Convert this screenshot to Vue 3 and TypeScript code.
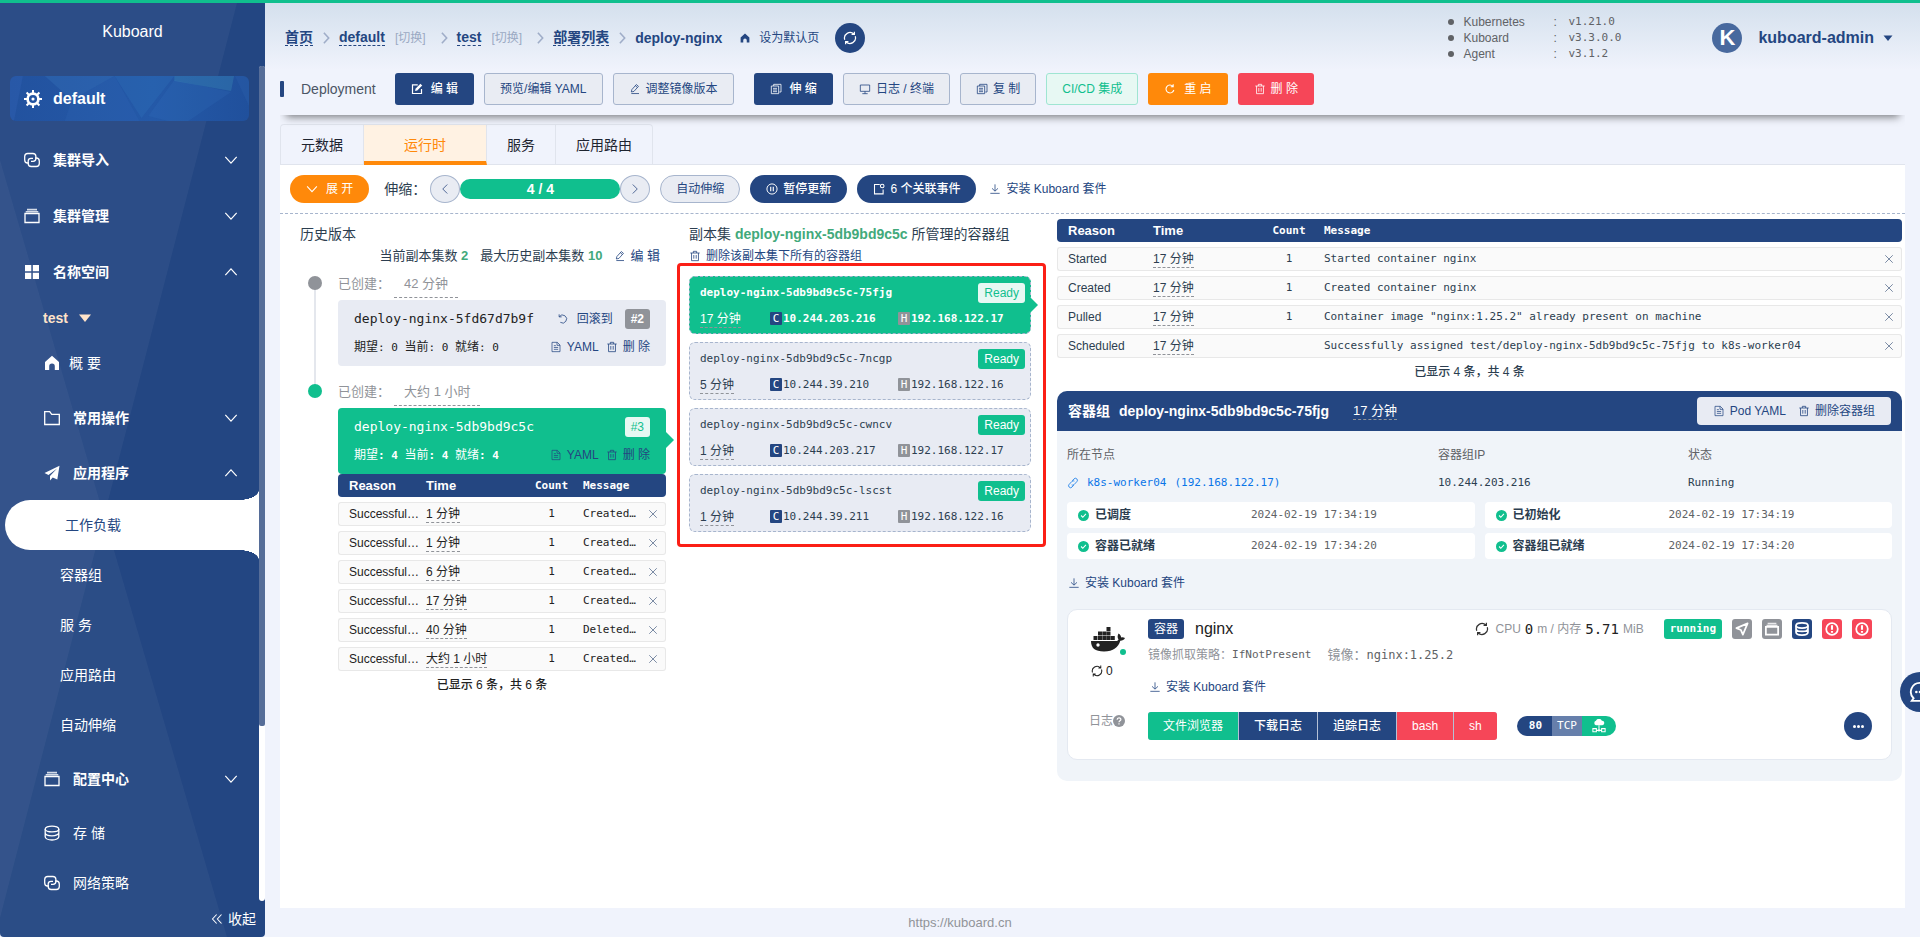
<script setup lang="ts">
interface EventRow {
  reason: string
  time: string
  count: string
  message: string
}
interface PodRow {
  name: string
  age: string
  podIp: string
  hostIp: string
  selected: boolean
}

const versions = [
  { label: 'Kubernetes', value: 'v1.21.0' },
  { label: 'Kuboard', value: 'v3.3.0.0' },
  { label: 'Agent', value: 'v3.1.2' },
]

const topMenu = [
  { label: '集群导入', icon: 'link', open: false },
  { label: '集群管理', icon: 'stack', open: false },
  { label: '名称空间', icon: 'grid', open: true },
]

const appMenu = ['容器组', '服 务', '应用路由', '自动伸缩']

const replicaSets = [
  { name: 'deploy-nginx-5fd67d7b9f', age: '42 分钟', count: 0, revision: '#2', current: false },
  { name: 'deploy-nginx-5db9bd9c5c', age: '大约 1 小时', count: 4, revision: '#3', current: true },
]

const rsEvents: EventRow[] = [
  { reason: 'Successful…', time: '1 分钟', count: '1', message: 'Created…' },
  { reason: 'Successful…', time: '1 分钟', count: '1', message: 'Created…' },
  { reason: 'Successful…', time: '6 分钟', count: '1', message: 'Created…' },
  { reason: 'Successful…', time: '17 分钟', count: '1', message: 'Created…' },
  { reason: 'Successful…', time: '40 分钟', count: '1', message: 'Deleted…' },
  { reason: 'Successful…', time: '大约 1 小时', count: '1', message: 'Created…' },
]

const pods: PodRow[] = [
  { name: 'deploy-nginx-5db9bd9c5c-75fjg', age: '17 分钟', podIp: '10.244.203.216', hostIp: '192.168.122.17', selected: true },
  { name: 'deploy-nginx-5db9bd9c5c-7ncgp', age: '5 分钟', podIp: '10.244.39.210', hostIp: '192.168.122.16', selected: false },
  { name: 'deploy-nginx-5db9bd9c5c-cwncv', age: '1 分钟', podIp: '10.244.203.217', hostIp: '192.168.122.17', selected: false },
  { name: 'deploy-nginx-5db9bd9c5c-lscst', age: '1 分钟', podIp: '10.244.39.211', hostIp: '192.168.122.16', selected: false },
]

const podEvents: EventRow[] = [
  { reason: 'Started', time: '17 分钟', count: '1', message: 'Started container nginx' },
  { reason: 'Created', time: '17 分钟', count: '1', message: 'Created container nginx' },
  { reason: 'Pulled', time: '17 分钟', count: '1', message: 'Container image "nginx:1.25.2" already present on machine' },
  { reason: 'Scheduled', time: '17 分钟', count: '', message: 'Successfully assigned test/deploy-nginx-5db9bd9c5c-75fjg to k8s-worker04' },
]

const conditions = [
  { name: '已调度', at: '2024-02-19 17:34:19' },
  { name: '已初始化', at: '2024-02-19 17:34:19' },
  { name: '容器已就绪', at: '2024-02-19 17:34:20' },
  { name: '容器组已就绪', at: '2024-02-19 17:34:20' },
]

const containerTools = [
  { icon: 'nav', tone: 'gray', label: '端口' },
  { icon: 'stack', tone: 'gray', label: '环境变量' },
  { icon: 'db', tone: 'navy', label: '挂载' },
  { icon: 'alert', tone: 'red', label: '就绪检查' },
  { icon: 'alert', tone: 'red', label: '存活检查' },
]
</script>

<template>
  <svg class="sprite" aria-hidden="true">
    <symbol id="i-gear" viewBox="0 0 16 16">
      <circle cx="8" cy="8" r="4.8" fill="none" stroke="currentColor" stroke-width="2.4" />
      <circle cx="8" cy="8" r="1.4" fill="currentColor" />
      <path d="M8 0v3M8 13v3M0 8h3M13 8h3M2.3 2.3l2.2 2.2M11.5 11.5l2.2 2.2M2.3 13.7l2.2-2.2M11.5 4.5l2.2-2.2" fill="none" stroke="currentColor" stroke-width="1.8" />
    </symbol>
    <symbol id="i-link" viewBox="0 0 16 16">
      <g fill="none" stroke="currentColor" stroke-width="1.3">
        <path d="M5 11H3.600A3 3 0 0 1 .7 8V4.400a3 3 0 0 1 3-2.900h5.200a3 3 0 0 1 3 2.900v2.200a2.800 2.800 0 0 1-2.800 2.800H7" />
        <path d="M11 6h1.200a3.100 3.100 0 0 1 3.100 3v2.500a3 3 0 0 1-3 3H7.200a3 3 0 0 1-3-3V9A2.800 2.800 0 0 1 7 6.300h2" />
      </g>
    </symbol>
    <symbol id="i-stack" viewBox="0 0 16 16">
      <path d="M3 .8h10v1.700H3zM1.700 3.100h12.600v1.500H1.700z" fill="currentColor" opacity=".8" />
      <path d="M1 5.500h14v9H1z" fill="none" stroke="currentColor" />
    </symbol>
    <symbol id="i-grid" viewBox="0 0 16 16">
      <path d="M1 1h6.300v6.300H1zM8.800 1H15v6.300H8.800zM1 8.700h6.300V15H1zM8.800 8.700H15V15H8.800z" fill="currentColor" />
    </symbol>
    <symbol id="i-home" viewBox="0 0 16 16">
      <path d="M8 .8 15 7v8h-4.200v-3.600a2.800 2.800 0 0 0-5.600 0V15H1V7z" fill="currentColor" />
    </symbol>
    <symbol id="i-folder" viewBox="0 0 16 16">
      <path d="M.7 1.700h5l2 2.600h7.600v10.200H.7z" fill="none" stroke="currentColor" stroke-width="1.3" />
    </symbol>
    <symbol id="i-plane" viewBox="0 0 16 16">
      <path d="M15.500.7.500 8l4 2L13 3.600 6 11v4.600l2.700-3.200 4.600 2z" fill="currentColor" />
    </symbol>
    <symbol id="i-nav" viewBox="0 0 16 16">
      <path d="M14.400 1.600 1.600 7l5.200 2.200L9 14.400z" fill="none" stroke="currentColor" stroke-linejoin="round" />
    </symbol>
    <symbol id="i-db" viewBox="0 0 16 16">
      <g fill="none" stroke="currentColor">
        <ellipse cx="8" cy="4" rx="6.800" ry="2.900" />
        <path d="M1.200 4v7.800C1.200 13.500 4 15 8 15s6.800-1.500 6.800-3.200V4M1.200 7.700c0 1.700 2.800 3.100 6.800 3.100s6.800-1.400 6.800-3.100" />
      </g>
    </symbol>
    <symbol id="i-down" viewBox="0 0 16 16">
      <path d="m1.500 4.500 6.500 7 6.500-7" fill="none" stroke="currentColor" stroke-width="1.4" />
    </symbol>
    <symbol id="i-up" viewBox="0 0 16 16">
      <path d="m1.500 11.500 6.500-7 6.500 7" fill="none" stroke="currentColor" stroke-width="1.4" />
    </symbol>
    <symbol id="i-left" viewBox="0 0 16 16">
      <path d="M11 2 5 8l6 6" fill="none" stroke="currentColor" stroke-width="1.3" />
    </symbol>
    <symbol id="i-right" viewBox="0 0 16 16">
      <path d="m5 2 6 6-6 6" fill="none" stroke="currentColor" stroke-width="1.3" />
    </symbol>
    <symbol id="i-sep" viewBox="0 0 8 14">
      <path d="m1 1 5.500 6L1 13" fill="none" stroke="currentColor" stroke-width="1.8" />
    </symbol>
    <symbol id="i-collapse" viewBox="0 0 16 16">
      <path d="M7.500 2 2 8l5.500 6M14 2 8.500 8l5.500 6" fill="none" stroke="currentColor" stroke-width="1.4" />
    </symbol>
    <symbol id="i-caret" viewBox="0 0 12 8">
      <path d="M0 .5h12L6 8z" fill="currentColor" />
    </symbol>
    <symbol id="i-refresh" viewBox="0 0 16 16">
      <path d="M2 10A6.300 6.300 0 0 1 12.500 3.700M13 .8V4H9.800M14 6a6.300 6.300 0 0 1-10.500 6.300M3 15.200V12h3.200" fill="none" stroke="currentColor" stroke-width="1.400" />
    </symbol>
    <symbol id="i-edit" viewBox="0 0 16 16">
      <path d="M9 2.500H2v11.500h12V8" fill="none" stroke="currentColor" stroke-width="1.600" />
      <path d="M5.500 10.500 6 7.800 12.500 1 15 3.300 8.300 10z" fill="currentColor" />
    </symbol>
    <symbol id="i-pen" viewBox="-1 -1 18 18">
      <path d="M2.500 12.500 3.200 9 10 1.300l3.200 2.700-6.800 7.600zM2.500 14.800H14M8.500 3l3.200 2.700" fill="none" stroke="currentColor" stroke-width="1.2" />
    </symbol>
    <symbol id="i-copy" viewBox="-1 -1 18 18">
      <path d="M4.500 3.500V1h11v11.500H13M1 3.500h11v11.500H1zM3.500 7h6M3.500 9.500h6M3.500 12h6" fill="none" stroke="currentColor" stroke-width="1.2" />
    </symbol>
    <symbol id="i-monitor" viewBox="-1 -1 18 18">
      <path d="M1 2h14v9.500H1zM4 15h8M8 11.500V15" fill="none" stroke="currentColor" stroke-width="1.2" />
    </symbol>
    <symbol id="i-restart" viewBox="-1 -1 18 18">
      <path d="M13.800 9.500A6 6 0 1 1 12.500 4M12.800.8v3.700H9.200" fill="none" stroke="currentColor" stroke-width="1.600" />
    </symbol>
    <symbol id="i-rollback" viewBox="-1 -1 18 18">
      <path d="M2.500 4.500A6 6 0 1 1 4 13M2.200 1v3.800H6" fill="none" stroke="currentColor" stroke-width="1.200" />
    </symbol>
    <symbol id="i-trash" viewBox="-1 -1 18 18">
      <path d="M1 3.500h14M2.800 3.500V15h10.400V3.500M5.500 3.500V1h5v2.500M6.200 6.500v5.500M9.800 6.500v5.500" fill="none" stroke="currentColor" stroke-width="1.200" />
    </symbol>
    <symbol id="i-doc" viewBox="-1 -1 18 18">
      <path d="M2 1h8l4 4v10H2zM9.500 1v4.500H14M4.800 6h3M4.800 8.700h6.400M4.800 11.500h6.400" fill="none" stroke="currentColor" stroke-width="1.1" />
    </symbol>
    <symbol id="i-pause" viewBox="0 0 16 16">
      <circle cx="8" cy="8" r="6.800" fill="none" stroke="currentColor" stroke-width="1.3" />
      <path d="M6.300 5v6M9.700 5v6" stroke="currentColor" stroke-width="1.5" />
    </symbol>
    <symbol id="i-note" viewBox="0 0 16 16">
      <path d="M9 2H2v12.500h11.500V8.500" fill="none" stroke="currentColor" stroke-width="1.4" />
      <circle cx="12.300" cy="4" r="2.400" fill="none" stroke="currentColor" stroke-width="1.4" />
    </symbol>
    <symbol id="i-download" viewBox="-1 -1 18 18">
      <path d="M8 1v10M3.500 7 8 11.300 12.500 7M1 14.500h14" fill="none" stroke="currentColor" stroke-width="1.200" />
    </symbol>
    <symbol id="i-x" viewBox="0 0 16 16">
      <path d="m2 2 12 12M14 2 2 14" fill="none" stroke="currentColor" stroke-width="1.300" />
    </symbol>
    <symbol id="i-chain" viewBox="-1 -1 18 18">
      <path d="m7 4.500 2.500-2.600a2.900 2.900 0 0 1 4.300 4L9.500 10.500a2.700 2.700 0 0 1-3.500.3M9 11.500l-2.500 2.600a2.900 2.900 0 0 1-4.300-4L6.500 5.500a2.700 2.700 0 0 1 3.500-.3" fill="none" stroke="currentColor" stroke-width="1.200" />
    </symbol>
    <symbol id="i-check" viewBox="0 0 16 16">
      <circle cx="8" cy="8" r="8" fill="currentColor" />
      <path d="m4.500 8 2.500 2.600 4.500-4.800" fill="none" stroke="#fff" stroke-width="1.600" />
    </symbol>
    <symbol id="i-alert" viewBox="0 0 16 16">
      <circle cx="8" cy="8" r="6.600" fill="none" stroke="currentColor" />
      <path d="M8 3.800v5M8 10.200v2" stroke="currentColor" stroke-width="2.400" />
    </symbol>
    <symbol id="i-question" viewBox="0 0 16 16">
      <circle cx="8" cy="8" r="8" fill="currentColor" />
      <path d="M5.500 6.300C5.500 3 10.500 3 10.500 6c0 1.700-2.500 1.700-2.500 3.500M8 11v1.800" fill="none" stroke="#fff" stroke-width="1.600" />
    </symbol>
    <symbol id="i-cloud" viewBox="0 0 16 16">
      <path d="M4.500 7a2.600 2.600 0 0 1 0-5A3.700 3.700 0 0 1 11.300 2a2.500 2.500 0 0 1 .5 5z" fill="currentColor" />
      <path d="M8 7v5M5 13h6M1 11h4v3.500H1zM11 11h4v3.500h-4z" fill="none" stroke="currentColor" stroke-width="1.200" />
      <circle cx="8" cy="13" r="1.300" fill="currentColor" />
    </symbol>
    <symbol id="i-docker" viewBox="0 0 34 25">
      <path d="M15.500 0h4v4h-4zM7 4.500h4v4H7zM11.300 4.500h4v4h-4zM15.500 4.500h4v4h-4zM2.500 9h4v4h-4zM7 9h4v4H7zM11.300 9h4v4h-4zM15.500 9h4v4h-4zM19.800 9h4v4h-4z" fill="currentColor" />
      <path d="M0 14h24.500c1.500 0 2.500-.6 3-1.600-1.300-2-1-4 0-5.900 1.700 1.100 2.500 2.400 2.600 3.900 1.400-.3 2.700-.1 3.900.6-.9 2-2.500 2.700-4.700 2.800C27.200 20.500 22.500 24.500 13 24.500 4 24.500 0 21 0 14z" fill="currentColor" />
      <circle cx="7" cy="18" r="1.700" fill="#fff" />
    </symbol>
    <symbol id="i-chat" viewBox="0 0 24 24">
      <path d="M12 2a9.800 9.800 0 1 1 0 19.600H3l2-2.800A9.800 9.800 0 0 1 12 2z" fill="none" stroke="currentColor" stroke-width="2" />
      <circle cx="8" cy="12" r="1.400" fill="currentColor" />
      <circle cx="12" cy="12" r="1.400" fill="currentColor" />
      <circle cx="16" cy="12" r="1.400" fill="currentColor" />
    </symbol>
  </svg>

  <div class="app">
    <aside class="side">
      <svg class="side-bg" viewBox="0 0 265 934" preserveAspectRatio="none" aria-hidden="true">
        <path d="M0 0H237L0 915z" fill="#fff" opacity=".045" />
        <path d="M0 157 227 934H0z" fill="#fff" opacity=".04" />
      </svg>
      <div class="brand">Kuboard</div>
      <div class="side-main">
        <nav class="menu">
          <a class="cluster" href="#cluster">
            <svg class="cluster-bg" viewBox="0 0 240 45" preserveAspectRatio="none" aria-hidden="true">
              <path d="M0 0h13L4 45H0z" fill="#3a6cc0" opacity=".25" />
              <path d="M35 0h70L62 24z" fill="#3e7fc4" opacity=".25" />
              <path d="M105 0 62 24 55 45h75z" fill="#3a74c4" opacity=".15" />
              <path d="M105 0h60l-33 42z" fill="#3583c8" opacity=".2" />
              <path d="M165 0h60l-3 15-57-10z" fill="#49a2c0" opacity=".25" />
              <path d="m165 4 57 12-43 29h-20l-20-5z" fill="#3c80cc" opacity=".15" />
              <path d="m226 0 14 30V0z" fill="#3a78c0" opacity=".15" />
            </svg>
            <svg class="ico18"><use href="#i-gear" /></svg>
            <span>default</span>
          </a>
          <a v-for="m in topMenu" :key="m.label" class="item top" href="#menu">
            <svg class="ico16"><use :href="`#i-${m.icon}`" /></svg>
            <span>{{ m.label }}</span>
            <svg class="arrow"><use :href="m.open ? '#i-up' : '#i-down'" /></svg>
          </a>
          <button class="ns" type="button">test <svg class="caret"><use href="#i-caret" /></svg></button>
          <a class="item home" href="#overview"><svg class="ico16"><use href="#i-home" /></svg><span>概 要</span></a>
          <a class="item folder" href="#common"><svg class="ico16"><use href="#i-folder" /></svg><span>常用操作</span><svg class="arrow"><use href="#i-down" /></svg></a>
          <a class="item folder" href="#apps"><svg class="ico16"><use href="#i-plane" /></svg><span>应用程序</span><svg class="arrow"><use href="#i-up" /></svg></a>
          <a class="active" href="#workload">工作负载</a>
          <a v-for="m in appMenu" :key="m" class="leaf" href="#leaf">{{ m }}</a>
          <a class="item folder config" href="#config"><svg class="ico16"><use href="#i-stack" /></svg><span>配置中心</span><svg class="arrow"><use href="#i-down" /></svg></a>
          <a class="item plain" href="#storage"><svg class="ico16"><use href="#i-db" /></svg><span>存 储</span></a>
          <a class="item plain" href="#network"><svg class="ico16"><use href="#i-link" /></svg><span>网络策略</span></a>
        </nav>
        <div class="scroll"><div class="thumb"></div></div>
      </div>
      <button class="collapse" type="button"><svg class="ico12"><use href="#i-collapse" /></svg>收起</button>
    </aside>

    <main class="main">
      <header class="head">
        <nav class="crumbs">
          <a class="crumb" href="#home">首页</a>
          <svg class="sep"><use href="#i-sep" /></svg>
          <a class="crumb" href="#default">default</a>
          <a class="switch" href="#switch">[切换]</a>
          <svg class="sep wide"><use href="#i-sep" /></svg>
          <a class="crumb" href="#test">test</a>
          <a class="switch" href="#switch">[切换]</a>
          <svg class="sep wide"><use href="#i-sep" /></svg>
          <a class="crumb" href="#list">部署列表</a>
          <svg class="sep"><use href="#i-sep" /></svg>
          <strong class="here">deploy-nginx</strong>
          <a class="pin" href="#pin"><svg class="ico10"><use href="#i-home" /></svg>设为默认页</a>
          <button class="round" type="button" aria-label="刷新"><svg class="ico14"><use href="#i-refresh" /></svg></button>
        </nav>
        <ul class="versions">
          <li v-for="v in versions" :key="v.label"><i class="bullet"></i><span class="vname">{{ v.label }}</span><span class="colon">:</span><span class="mono">{{ v.value }}</span></li>
        </ul>
        <button class="user" type="button">
          <span class="avatar">K</span>
          <span>kuboard-admin</span>
          <svg class="ucaret"><use href="#i-caret" /></svg>
        </button>
      </header>

      <div class="actions">
        <i class="mark"></i>
        <span class="kind">Deployment</span>
        <button class="btn navy roomy" type="button"><svg class="ico12"><use href="#i-edit" /></svg>编 辑</button>
        <button class="btn light" type="button">预览/编辑 YAML</button>
        <button class="btn light" type="button"><svg class="ico12"><use href="#i-pen" /></svg>调整镜像版本</button>
        <button class="btn navy roomy apart" type="button"><svg class="ico12"><use href="#i-copy" /></svg>伸 缩</button>
        <button class="btn light" type="button"><svg class="ico12"><use href="#i-monitor" /></svg>日志 / 终端</button>
        <button class="btn light" type="button"><svg class="ico12"><use href="#i-copy" /></svg>复 制</button>
        <button class="btn mint" type="button">CI/CD 集成</button>
        <button class="btn orange roomy" type="button"><svg class="ico12"><use href="#i-restart" /></svg>重 启</button>
        <button class="btn red" type="button"><svg class="ico12"><use href="#i-trash" /></svg>删 除</button>
      </div>

      <div class="tabs" role="tablist">
        <button class="tab" type="button" role="tab">元数据</button>
        <button class="tab on" type="button" role="tab" aria-selected="true">运行时</button>
        <button class="tab" type="button" role="tab">服务</button>
        <button class="tab" type="button" role="tab">应用路由</button>
      </div>

      <section class="sheet">
        <div class="scalebar">
          <button class="pill orange expand" type="button"><svg class="ico12"><use href="#i-down" /></svg>展 开</button>
          <span class="slabel">伸缩：</span>
          <button class="circ" type="button" aria-label="减少"><svg class="ico12"><use href="#i-left" /></svg></button>
          <div class="bar">4 / 4</div>
          <button class="circ" type="button" aria-label="增加"><svg class="ico12"><use href="#i-right" /></svg></button>
          <button class="pill light" type="button">自动伸缩</button>
          <button class="pill navy" type="button"><svg class="ico12"><use href="#i-pause" /></svg>暂停更新</button>
          <button class="pill navy" type="button"><svg class="ico12"><use href="#i-note" /></svg>6 个关联事件</button>
          <a class="act" href="#install"><svg class="ico12"><use href="#i-download" /></svg>安装 Kuboard 套件</a>
        </div>

        <div class="cols">
          <section class="history">
            <h2 class="title">历史版本</h2>
            <div class="stats">
              <span>当前副本集数 <b>2</b></span>
              <span>最大历史副本集数 <b>10</b></span>
              <a class="act" href="#edit"><svg class="ico12"><use href="#i-pen" /></svg>编 辑</a>
            </div>
            <div v-for="rs in replicaSets" :key="rs.name" class="node" :class="{ current: rs.current }">
              <i class="dot"></i>
              <div class="created">已创建：<span class="since">{{ rs.age }}</span></div>
              <article class="rs">
                <div class="line">
                  <span class="rsname">{{ rs.name }}</span>
                  <a v-if="!rs.current" class="act roll" href="#rollback"><svg class="ico12"><use href="#i-rollback" /></svg>回滚到</a>
                  <span class="badge">{{ rs.revision }}</span>
                </div>
                <div class="line">
                  <span class="counts"><em>期望</em>: {{ rs.count }} <em>当前</em>: {{ rs.count }} <em>就绪</em>: {{ rs.count }}</span>
                  <a class="act" href="#yaml"><svg class="ico12"><use href="#i-doc" /></svg>YAML</a>
                  <a class="act" href="#delete"><svg class="ico12"><use href="#i-trash" /></svg>删 除</a>
                </div>
              </article>
            </div>
            <div class="rsevents">
              <table class="events small">
                <thead>
                  <tr><th class="reason">Reason</th><th class="time">Time</th><th class="count">Count</th><th>Message</th><th class="close"></th></tr>
                </thead>
                <tbody>
                  <tr v-for="(e, i) in rsEvents" :key="i">
                    <td>{{ e.reason }}</td>
                    <td><span class="ago">{{ e.time }}</span></td>
                    <td class="count">{{ e.count }}</td>
                    <td class="mono">{{ e.message }}</td>
                    <td class="close"><button type="button" aria-label="关闭"><svg class="ico10"><use href="#i-x" /></svg></button></td>
                  </tr>
                </tbody>
              </table>
              <p class="shown">已显示 6 条，共 6 条</p>
            </div>
          </section>

          <section class="replicas">
            <h2 class="title">副本集 <b>deploy-nginx-5db9bd9c5c</b> 所管理的容器组</h2>
            <div class="sub"><a class="act" href="#delete-all"><svg class="ico12"><use href="#i-trash" /></svg>删除该副本集下所有的容器组</a></div>
            <div class="frame">
              <article v-for="p in pods" :key="p.name" class="pod" :class="{ sel: p.selected }">
                <div class="podline"><span class="mono">{{ p.name }}</span><span class="ready">Ready</span></div>
                <div class="podline">
                  <span class="page"><span class="ago">{{ p.age }}</span></span>
                  <span class="ip cip"><i class="tag c">C</i>{{ p.podIp }}</span>
                  <span class="ip"><i class="tag h">H</i>{{ p.hostIp }}</span>
                </div>
              </article>
            </div>
          </section>

          <section class="detail">
            <table class="events big">
              <thead>
                <tr><th class="reason">Reason</th><th class="time">Time</th><th class="count">Count</th><th>Message</th><th class="close"></th></tr>
              </thead>
              <tbody>
                <tr v-for="(e, i) in podEvents" :key="i">
                  <td>{{ e.reason }}</td>
                  <td><span class="ago">{{ e.time }}</span></td>
                  <td class="count">{{ e.count }}</td>
                  <td class="mono">{{ e.message }}</td>
                  <td class="close"><button type="button" aria-label="关闭"><svg class="ico10"><use href="#i-x" /></svg></button></td>
                </tr>
              </tbody>
            </table>
            <p class="shown">已显示 4 条，共 4 条</p>

            <article class="panel">
              <header class="phead">
                <span>容器组</span>
                <span class="pname">deploy-nginx-5db9bd9c5c-75fjg</span>
                <span class="ago pago">17 分钟</span>
                <div class="pbtns">
                  <a class="act" href="#pod-yaml"><svg class="ico12"><use href="#i-doc" /></svg>Pod YAML</a>
                  <a class="act" href="#pod-delete"><svg class="ico12"><use href="#i-trash" /></svg>删除容器组</a>
                </div>
              </header>
              <div class="pbody">
                <dl class="info">
                  <div><dt>所在节点</dt><dd><a class="nodelink" href="#node"><svg class="ico12"><use href="#i-chain" /></svg><span>k8s-worker04</span><span>(192.168.122.17)</span></a></dd></div>
                  <div><dt>容器组IP</dt><dd>10.244.203.216</dd></div>
                  <div><dt>状态</dt><dd>Running</dd></div>
                </dl>
                <div class="conds">
                  <div v-for="c in conditions" :key="c.name" class="cond">
                    <svg class="ok"><use href="#i-check" /></svg>
                    <strong>{{ c.name }}</strong>
                    <span class="mono">{{ c.at }}</span>
                  </div>
                </div>
                <a class="act install" href="#install"><svg class="ico12"><use href="#i-download" /></svg>安装 Kuboard 套件</a>

                <article class="box">
                  <div class="boxside">
                    <div class="whale"><svg class="docker"><use href="#i-docker" /></svg><i class="live"></i></div>
                    <div class="restarts"><svg class="ico12"><use href="#i-refresh" /></svg>0</div>
                    <div class="logs">日志<svg class="ico12"><use href="#i-question" /></svg></div>
                  </div>
                  <div class="boxmain">
                    <div class="r1">
                      <span class="ctag">容器</span>
                      <span class="cname">nginx</span>
                      <span class="usage"><svg class="ico14"><use href="#i-refresh" /></svg>CPU <b>0</b> m / 内存 <b>5.71</b> MiB</span>
                      <span class="running">running</span>
                      <button v-for="(t, i) in containerTools" :key="i" class="tool" :class="t.tone" type="button" :aria-label="t.label"><svg class="ico14"><use :href="`#i-${t.icon}`" /></svg></button>
                    </div>
                    <div class="r2"><span>镜像抓取策略：</span><span class="mono policy">IfNotPresent</span><span class="imgl">镜像：</span><span class="image">nginx:1.25.2</span></div>
                    <a class="act" href="#install"><svg class="ico12"><use href="#i-download" /></svg>安装 Kuboard 套件</a>
                    <div class="r4">
                      <div class="shells">
                        <button class="g green" type="button">文件浏览器</button>
                        <button class="g navy" type="button">下载日志</button>
                        <button class="g navy" type="button">追踪日志</button>
                        <button class="g red" type="button">bash</button>
                        <button class="g red" type="button">sh</button>
                      </div>
                      <div class="port"><span class="pnum">80</span><span class="ptype">TCP</span><span class="pcloud"><svg class="ico14"><use href="#i-cloud" /></svg></span></div>
                      <button class="more" type="button" aria-label="更多"><i></i><i></i><i></i></button>
                    </div>
                  </div>
                </article>
              </div>
            </article>
          </section>
        </div>
      </section>
      <footer class="foot"><a href="https://kuboard.cn">https://kuboard.cn</a></footer>
    </main>
    <button class="chat" type="button" aria-label="客服"><svg><use href="#i-chat" /></svg></button>
  </div>
</template>

<style>
body {
  background: #eff3fc;
  overflow-x: hidden;
}
</style>

<style scoped>
* {
  box-sizing: border-box;
}
.sprite {
  position: absolute;
  width: 0;
  height: 0;
}
.app {
  display: flex;
  min-height: 100vh;
  border-top: 3px solid #10bf8e;
  font: 12px/20px "Liberation Sans", "Noto Sans CJK SC", sans-serif;
  color: #2c3e50;
  overflow: hidden;
}
a {
  color: inherit;
  text-decoration: none;
}
button {
  font: inherit;
  color: inherit;
  background: none;
  border: 0;
  padding: 0;
  margin: 0;
  cursor: pointer;
}
svg {
  flex: none;
  display: block;
  stroke-width: 1.3px;
}
.ico10 { width: 10px; height: 10px; }
.ico12 { width: 12px; height: 12px; }
.ico14 { width: 14px; height: 14px; }
.ico16 { width: 16px; height: 16px; }
.ico18 { width: 18px; height: 18px; }
.mono {
  font-family: "DejaVu Sans Mono", "Noto Sans CJK SC", monospace;
  font-size: 11px;
}
.act {
  display: inline-flex;
  align-items: center;
  gap: 5px;
  color: #244681;
}

/* sidebar */
.side {
  position: relative;
  width: 265px;
  flex: none;
  display: flex;
  flex-direction: column;
  background: #234682;
  color: #fff;
  font-size: 14px;
  border-radius: 0 0 4px 4px;
}
.side-bg {
  position: absolute;
  inset: 0;
  width: 100%;
  height: 100%;
}
.brand {
  position: relative;
  height: 63px;
  line-height: 58px;
  text-align: center;
  font-size: 16px;
}
.side-main {
  position: relative;
  flex: 1 1 0;
  min-height: 0;
  display: flex;
}
.menu {
  flex: 1;
  display: flex;
  flex-direction: column;
  padding-top: 10px;
  overflow-y: auto;
  scrollbar-width: none;
}
.menu > * {
  flex-shrink: 0;
}
.cluster {
  position: relative;
  display: flex;
  align-items: center;
  gap: 11px;
  height: 45px;
  margin: 0 10px 11px;
  padding-left: 14px;
  border-radius: 6px;
  background: linear-gradient(90deg, #22529f, #2459a8 60%, #20509c);
  font-size: 16px;
  font-weight: 700;
  overflow: hidden;
}
.cluster-bg {
  position: absolute;
  inset: 0;
  width: 100%;
  height: 100%;
}
.cluster .ico18,
.cluster span {
  position: relative;
}
.item {
  display: flex;
  align-items: center;
  padding: 0 21px 0 44px;
}
.item span {
  flex: 1;
}
.item.top {
  height: 56px;
  padding-left: 24px;
  gap: 13px;
  font-weight: 700;
}
.arrow {
  width: 14px;
  height: 14px;
}
.ns {
  display: flex;
  align-items: center;
  gap: 11px;
  height: 36px;
  padding-left: 43px;
  color: #ffe3c9;
  font-weight: 700;
}
.caret {
  width: 12px;
  height: 8px;
}
.item.home {
  height: 54px;
  gap: 9px;
}
.item.folder {
  height: 55px;
  gap: 13px;
  font-weight: 700;
}
.item.config {
  height: 58px;
}
.item.plain {
  height: 50px;
  gap: 13px;
}
.active {
  position: relative;
  height: 50px;
  margin-left: 5px;
  padding-left: 60px;
  line-height: 50px;
  background: #fff;
  border-radius: 25px 0 0 25px;
  color: #244681;
}
.active::before,
.active::after {
  content: "";
  position: absolute;
  right: 0;
  width: 20px;
  height: 10px;
}
.active::before {
  bottom: 100%;
  background: radial-gradient(20px 10px at 0 0, transparent 98%, #fff 100%);
}
.active::after {
  top: 100%;
  background: radial-gradient(20px 10px at 0 100%, transparent 98%, #fff 100%);
}
.leaf {
  height: 50px;
  line-height: 50px;
  padding-left: 60px;
}
.scroll {
  width: 6px;
  background: #fff;
  border-radius: 3px;
}
.thumb {
  height: 79%;
  border-radius: 2px;
  background: #566d98;
}
.collapse {
  position: relative;
  display: flex;
  align-items: center;
  justify-content: flex-end;
  gap: 5px;
  height: 36px;
  padding-right: 9px;
}

/* header */
.main {
  flex: 1;
  min-width: 0;
  display: flex;
  flex-direction: column;
  padding: 0 15px;
  background: linear-gradient(#d4e0ed, #f0f3fc 67px);
}
.head {
  display: flex;
  align-items: center;
  height: 70px;
}
.crumbs {
  display: flex;
  align-items: center;
  flex: 1;
  padding-left: 5px;
  color: #244681;
}
.crumb,
.here {
  font-size: 14px;
  font-weight: 700;
}
.crumb {
  line-height: 15px;
  border-bottom: 1px dashed #244681;
}
.switch {
  margin-left: 10px;
  color: #9ba9c3;
}
.sep {
  width: 7px;
  height: 14px;
  margin: 0 9px 0 10px;
  color: #9fadc8;
}
.sep.wide {
  margin-left: 15px;
}
.pin {
  display: flex;
  align-items: center;
  gap: 9px;
  margin-left: 18px;
}
.round {
  width: 30px;
  height: 30px;
  margin-left: 16px;
  display: grid;
  place-items: center;
  border-radius: 50%;
  background: #244681;
  color: #fff;
}
.versions {
  list-style: none;
  margin: 0 91px 0 0;
  padding: 0;
  line-height: 16px;
  color: #606266;
}
.versions li {
  display: flex;
  align-items: center;
}
.bullet {
  width: 6px;
  height: 6px;
  border-radius: 50%;
  background: #606266;
  margin-right: 9px;
}
.vname {
  width: 90px;
}
.colon {
  width: 15px;
}
.user {
  display: flex;
  align-items: center;
  gap: 16px;
  padding-right: 12px;
  color: #244681;
  font-size: 16px;
  font-weight: 700;
}
.avatar {
  width: 30px;
  height: 30px;
  line-height: 30px;
  border-radius: 50%;
  background: #48699e;
  color: #fff;
  font-size: 22px;
  text-align: center;
}
.ucaret {
  width: 10px;
  height: 6px;
  margin-left: -7px;
}

/* action bar */
.actions {
  display: flex;
  align-items: center;
  gap: 10px;
  padding-bottom: 10px;
  background: #f0f3fc;
  box-shadow: 0 8px 8px -6px rgba(0, 0, 0, .5);
  clip-path: inset(0 0 -12px 0);
}
.mark {
  width: 4px;
  height: 16px;
  border-radius: 1px;
  background: #244681;
}
.kind {
  margin: 0 9px 0 7px;
  font-size: 14px;
  color: #4b5565;
}
.btn,
.pill {
  display: flex;
  align-items: center;
  justify-content: center;
  gap: 5px;
  height: 32px;
  padding: 0 15px;
  border: 1px solid transparent;
  border-radius: 3px;
  white-space: nowrap;
}
.roomy {
  gap: 8px;
}
.apart {
  margin-left: 10px;
}
.navy {
  background: #244681;
  color: #fff;
  font-weight: 500;
}
.light {
  background: #e9ecf3;
  border-color: #a7b5cd;
  color: #244681;
}
.mint {
  background: #e7f8f3;
  border-color: #9fe5d2;
  color: #10bf8e;
}
.orange {
  background: #ff890a;
  color: #fff;
}
.red {
  background: #f64658;
  color: #fff;
}

/* tabs */
.tabs {
  display: flex;
  margin-top: 9px;
  border-bottom: 1px solid #e0e4ed;
}
.tab {
  height: 40px;
  padding: 0 20px;
  border: solid #e0e4ed;
  border-width: 1px 1px 0 0;
  font-size: 14px;
  color: #1e2430;
}
.tab:first-child {
  border-left-width: 1px;
  border-top-left-radius: 4px;
}
.tab:last-child {
  border-top-right-radius: 4px;
}
.tab.on {
  height: 41px;
  margin-bottom: -1px;
  padding: 3px 40px 0;
  background: #fff2e3;
  border-bottom: 4px solid #ff890a;
  color: #ff890a;
}

.sheet {
  flex: 1;
  background: #fff;
}
.scalebar {
  display: flex;
  align-items: center;
  height: 49px;
  padding-left: 10px;
  border-bottom: 1px dashed #a7b5cd;
}
.pill {
  height: 28px;
  padding: 0 15px;
  margin-left: 10px;
  border-radius: 14px;
}
.pill.expand {
  margin-left: 0;
  gap: 8px;
}
.slabel {
  margin-left: 15px;
  width: 46px;
  font-size: 14px;
  white-space: nowrap;
}
.circ {
  width: 30px;
  height: 28px;
  display: grid;
  place-items: center;
  border: 1px solid #a7b5cd;
  border-radius: 50%;
  background: #e9ecf3;
  color: #4c6594;
}
.bar {
  width: 160px;
  height: 20px;
  border-radius: 10px;
  background: #10bf8e;
  color: #fff;
  font-size: 14px;
  font-weight: 700;
  text-align: center;
}
.scalebar .act {
  margin-left: 13px;
}

.cols {
  display: grid;
  grid-template-columns: 386fr 369fr 845fr;
  gap: 11px;
  padding: 0 3px 0 0;
}
.title {
  margin: 10px 0 2px 20px;
  font-size: 14px;
  font-weight: 400;
  white-space: nowrap;
}
.title b,
.stats b {
  color: #42a97b;
}

/* history */
.stats {
  display: flex;
  justify-content: flex-end;
  gap: 12px;
  padding-right: 6px;
  margin-bottom: 4px;
  font-size: 13px;
}
.stats .act {
  gap: 4px;
}
.node {
  position: relative;
  padding: 0 0 12px 58px;
}
.node.current {
  padding-bottom: 0;
}
.node:not(.current)::before {
  content: "";
  position: absolute;
  left: 34px;
  top: 13px;
  width: 2px;
  height: 100%;
  background: #e4e7ed;
}
.dot {
  position: absolute;
  left: 28px;
  top: 6px;
  width: 14px;
  height: 14px;
  border-radius: 50%;
  background: #909399;
}
.current .dot {
  background: #10bf8e;
}
.created {
  height: 28px;
  margin-bottom: 2px;
  line-height: 27px;
  font-size: 13px;
  color: #909399;
}
.since {
  display: inline-block;
  height: 28px;
  margin-left: 4px;
  padding: 0 10px;
  border-bottom: 1px dashed #909399;
}
.rs {
  position: relative;
  padding: 9px 16px;
  border-radius: 4px;
  background: #e8ebf3;
  color: #222;
}
.current .rs {
  background: #10bf8e;
  color: #fff;
}
.current .rs::after {
  content: "";
  position: absolute;
  left: 100%;
  top: 24px;
  border: 8px solid transparent;
  border-left-color: #10bf8e;
  border-right-width: 0;
}
.line {
  display: flex;
  align-items: center;
  gap: 7px;
  height: 20px;
}
.line + .line {
  margin-top: 8px;
}
.line > :first-child {
  flex: 1;
  white-space: nowrap;
}
.rsname {
  font: 13px/20px "DejaVu Sans Mono", monospace;
}
.counts {
  font: 11px/20px "DejaVu Sans Mono", "Noto Sans CJK SC", monospace;
}
.counts em {
  font: 12px/20px "Noto Sans CJK SC", sans-serif;
}
.current .counts {
  font-weight: 700;
}
.roll {
  gap: 8px;
  margin-right: 5px;
}
.badge {
  height: 20px;
  padding: 0 6px;
  border-radius: 3px;
  background: #909399;
  color: #fff;
  font-weight: 700;
}
.current .badge {
  background: #e7f8f3;
  color: #10bf8e;
  font-weight: 400;
}
.rsevents {
  padding-left: 58px;
  color: #222;
}

/* event tables */
.events {
  width: 100%;
  table-layout: fixed;
  border-collapse: separate;
  border-spacing: 0 5px;
  margin-top: -5px;
  line-height: 18px;
}
.events th {
  height: 23px;
  padding: 0;
  background: #244681;
  color: #fff;
  text-align: left;
  font: 700 11px/18px "DejaVu Sans Mono", monospace;
}
.events th.reason,
.events th.time {
  font: 700 13px/18px "Liberation Sans", sans-serif;
}
.events th:first-child {
  padding-left: 11px;
  border-radius: 4px 0 0 4px;
}
.events th:last-child {
  border-radius: 0 4px 4px 0;
}
.events td {
  height: 24px;
  padding: 0;
  background: #fafafa;
  border: solid #e8e8e8;
  border-width: 1px 0;
  white-space: nowrap;
}
.events td:first-child {
  padding-left: 10px;
  border-left-width: 1px;
  border-radius: 3px 0 0 3px;
}
.events td:last-child {
  border-right-width: 1px;
  border-radius: 0 3px 3px 0;
}
.small .reason { width: 88px; }
.small .time { width: 104px; }
.small .count { width: 53px; }
.small .close { width: 24px; }
.big .reason { width: 96px; }
.big .time { width: 115px; }
.big .count { width: 56px; }
.big .close { width: 24px; }
.events .count {
  text-align: center;
  font-family: "DejaVu Sans Mono", monospace;
  font-size: 11px;
  padding-right: 14px;
}
.small .count {
  padding-right: 10px;
}
.close button {
  display: block;
  margin-left: 6px;
  color: #5f7391;
}
.ago {
  display: inline-block;
  line-height: 16px;
  border-bottom: 1px dashed #909399;
}
.shown {
  margin: 0;
  padding-right: 20px;
  line-height: 18px;
  text-align: center;
  font-weight: 500;
}

/* replicas */
.replicas .title {
  margin-left: 12px;
}
.sub {
  display: flex;
  padding-left: 12px;
  height: 20px;
}
.frame {
  position: relative;
  margin-top: -3px;
  padding: 10px 12px 12px 9px;
  border: 3px solid #fb1f16;
  border-radius: 4px;
  display: grid;
  gap: 8px;
}
.pod {
  position: relative;
  height: 58px;
  padding: 6px 5px 4px 10px;
  border: 1px dashed #a7b5cd;
  border-radius: 6px;
  background: #e8ebf3;
}
.pod.sel {
  background: #10bf8e;
  color: #fff;
}
.sel .mono,
.sel .ip {
  font-weight: 700;
}
.pod.sel::after {
  content: "";
  position: absolute;
  left: 100%;
  top: 20px;
  border: 8px solid transparent;
  border-left-color: #10bf8e;
  border-right-width: 0;
}
.podline {
  display: flex;
  align-items: center;
  height: 20px;
}
.podline + .podline {
  margin-top: 6px;
}
.podline .mono {
  flex: 1;
}
.ready {
  height: 20px;
  padding: 0 6px;
  border-radius: 3px;
  background: #10bf8e;
  color: #fff;
  font-weight: 500;
}
.sel .ready {
  background: #e7f8f3;
  color: #10bf8e;
  font-weight: 400;
}
.page {
  width: 70px;
}
.ip {
  display: flex;
  align-items: center;
  gap: 1px;
  font: 11px/20px "DejaVu Sans Mono", monospace;
}
.cip {
  width: 128px;
}
.tag {
  width: 12px;
  height: 13px;
  margin-bottom: 2px;
  border-radius: 1px;
  color: #fff;
  font-style: normal;
  font-weight: 400;
  line-height: 14px;
  text-align: center;
}
.tag.c { background: #244681; }
.tag.h { background: #909399; }

/* pod panel */
.detail {
  padding-top: 5px;
  min-width: 0;
}
.panel {
  margin-top: 10px;
  border-radius: 10px;
  background: #f0f4f9;
  overflow: hidden;
}
.phead {
  display: flex;
  align-items: center;
  height: 40px;
  padding: 0 11px;
  background: #244681;
  color: #fff;
  font-size: 14px;
  font-weight: 700;
}
.pname {
  margin: 0 24px 0 9px;
}
.pago {
  font-size: 13px;
  font-weight: 400;
}
.pbtns {
  display: flex;
  align-items: center;
  gap: 12px;
  height: 28px;
  margin-left: auto;
  padding: 0 16px;
  border-radius: 4px;
  background: #e8ebf3;
  font-size: 12px;
  font-weight: 400;
}
.pbody {
  padding: 14px 10px 21px;
}
.info {
  display: grid;
  grid-template-columns: 371fr 250fr 204fr;
  margin: 0 0 9px;
}
.info dt {
  color: #606266;
}
.info dd {
  margin: 8px 0 0;
  font: 11px/20px "DejaVu Sans Mono", monospace;
}
.nodelink {
  display: flex;
  align-items: center;
  gap: 8px;
  color: #0a75e8;
}
.conds {
  display: grid;
  grid-template-columns: 1fr 1fr;
  gap: 5px 10px;
}
.cond {
  display: flex;
  align-items: center;
  height: 26px;
  padding-left: 11px;
  border-radius: 4px;
  background: #fff;
}
.ok {
  width: 11px;
  height: 11px;
  margin-right: 6px;
  color: #10bf8e;
}
.cond strong {
  width: 156px;
}
.cond .mono {
  color: #606266;
}
.install {
  display: flex;
  margin: 14px 0 16px 1px;
}
.box {
  display: flex;
  padding: 9px 19px 19px 21px;
  border: 1px solid #e4e9f1;
  border-radius: 10px;
  background: #fff;
}
.boxside {
  width: 59px;
  padding-top: 8px;
}
.whale {
  position: relative;
  padding-left: 2px;
}
.docker {
  width: 34px;
  height: 25px;
  color: #222;
}
.live {
  position: absolute;
  left: 31px;
  top: 22px;
  width: 6px;
  height: 6px;
  border-radius: 50%;
  background: #10bf8e;
}
.restarts {
  display: flex;
  align-items: center;
  gap: 3px;
  margin: 9px 0 30px 2px;
  color: #222;
}
.logs {
  display: flex;
  align-items: center;
  color: #909399;
}
.boxmain {
  flex: 1;
}
.r1,
.r2,
.r4 {
  display: flex;
  align-items: center;
}
.ctag {
  padding: 0 6px;
  border-radius: 3px;
  background: #244681;
  color: #fff;
}
.cname {
  margin-left: 11px;
  font-size: 16px;
  color: #222;
}
.usage {
  display: flex;
  align-items: center;
  gap: 4px;
  margin-left: auto;
  margin-right: 20px;
  color: #909399;
}
.usage svg {
  margin-right: 2px;
  color: #333;
}
.usage b {
  font: 14px/20px "DejaVu Sans Mono", monospace;
  color: #222;
}
.running {
  padding: 0 6px;
  border-radius: 3px;
  background: #10bf8e;
  color: #fff;
  font: 700 11px/20px "DejaVu Sans Mono", monospace;
}
.tool {
  width: 20px;
  height: 20px;
  margin-left: 10px;
  display: grid;
  place-items: center;
  border-radius: 3px;
  color: #fff;
}
.tool svg {
  stroke-width: 2px;
}
.tool.gray {
  background: #909399;
}
.r2 {
  margin: 6px 0 12px;
  color: #909399;
}
.policy,
.image {
  color: #606266;
}
.imgl {
  margin-left: 16px;
  font-size: 13px;
}
.image {
  font: 12px/20px "DejaVu Sans Mono", monospace;
}
.boxmain > .act {
  display: flex;
  margin-left: 1px;
}
.r4 {
  margin-top: 15px;
}
.shells {
  display: flex;
  gap: 1px;
  border-radius: 3px;
  overflow: hidden;
  background: #b5c1d6;
}
.g {
  height: 28px;
  padding: 0 15px;
}
.green {
  background: #10bf8e;
  color: #fff;
}
.port {
  display: flex;
  margin-left: 20px;
  border-radius: 10px;
  overflow: hidden;
  color: #fff;
  font: 700 11px/20px "DejaVu Sans Mono", monospace;
}
.pnum {
  padding: 0 10px 0 12px;
  background: #244681;
}
.ptype {
  padding: 0 5px;
  background: #667fab;
  font-weight: 400;
}
.pcloud {
  display: grid;
  place-items: center;
  width: 34px;
  background: #10bf8e;
}
.more {
  display: flex;
  align-items: center;
  justify-content: center;
  gap: 1px;
  width: 28px;
  height: 28px;
  margin-left: auto;
  border-radius: 50%;
  background: #244681;
}
.more i {
  width: 3px;
  height: 3px;
  border-radius: 50%;
  background: #fff;
}

.foot {
  height: 29px;
  line-height: 29px;
  padding-right: 265px;
  text-align: center;
  font-size: 13px;
  color: #909399;
}
.chat {
  position: fixed;
  right: -20px;
  top: 672px;
  width: 40px;
  height: 40px;
  padding-left: 9px;
  border-radius: 50%;
  background: #244681;
  color: #fff;
}
.chat svg {
  width: 22px;
  height: 22px;
}
</style>
